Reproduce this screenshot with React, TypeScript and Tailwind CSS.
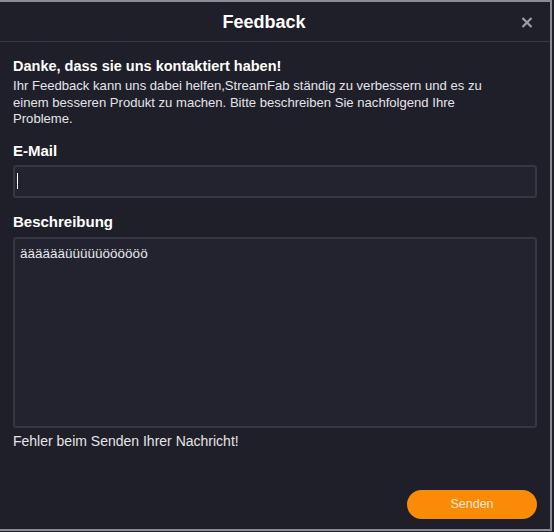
import React from "react";

export default function App() {
  return (
    <div
      className="w-[554px] h-[532px] bg-[#1e1e28] overflow-hidden"
      style={{ fontFamily: '"Liberation Sans", Arial, sans-serif' }}
    >
      <div className="w-[552px] h-[531px] border-t-2 border-r-2 border-b-2 border-[#8b8b96] bg-[#1f1f29] flex flex-col">
        {/* Header */}
        <div className="relative h-[40px] shrink-0 border-b border-[#3a3a47] flex items-center justify-center pr-[22px]">
          <span className="text-[18px] font-bold text-white leading-none">Feedback</span>
          <button className="absolute right-[17px] top-[15px] w-[12px] h-[11px] flex items-center justify-center">
            <svg width="12" height="11" viewBox="0 0 12 11">
              <path d="M1.5 1 L10.5 10 M10.5 1 L1.5 10" stroke="#9d9da8" strokeWidth="2.2" strokeLinecap="butt" />
            </svg>
          </button>
        </div>

        {/* Content */}
        <div className="flex flex-col flex-1 px-[13px] pt-[14px]">
          <div className="text-[14.5px] font-bold text-white leading-[20px]">
            Danke, dass sie uns kontaktiert haben!
          </div>
          <p className="mt-[2px] max-w-[500px] text-[13.1px] leading-[16.5px] text-[#e4e4e8]">
            Ihr Feedback kann uns dabei helfen,StreamFab ständig zu verbessern und es zu einem besseren Produkt zu machen. Bitte beschreiben Sie nachfolgend Ihre Probleme.
          </p>

          <div className="mt-[13px] text-[15px] font-bold text-white leading-[20px]">E-Mail</div>
          <div className="mt-[4px] h-[33px] rounded-[3px] border-2 border-[#363644] bg-[#232330] flex items-center pl-[2px]">
            <div className="w-[1px] h-[16px] bg-white" />
          </div>

          <div className="mt-[14px] text-[15px] font-bold text-white leading-[20px]">Beschreibung</div>
          <div className="mt-[5px] h-[191px] rounded-[3px] border-2 border-[#363644] bg-[#232330] px-[5px] pt-[2px]">
            <span className="text-[13.5px] leading-[18px] text-[#e8e8ec]">ääääääüüüüüöööööö</span>
          </div>

          <div className="mt-[4px] text-[14px] leading-[18px] text-[#e4e4e8]">
            Fehler beim Senden Ihrer Nachricht!
          </div>

          <div className="mt-[40px] flex justify-end">
            <button className="w-[130px] h-[29px] rounded-full bg-[#fb8b07] text-[12.5px] text-[#fde8d2] flex items-center justify-center">
              Senden
            </button>
          </div>
        </div>
      </div>
    </div>
  );
}
